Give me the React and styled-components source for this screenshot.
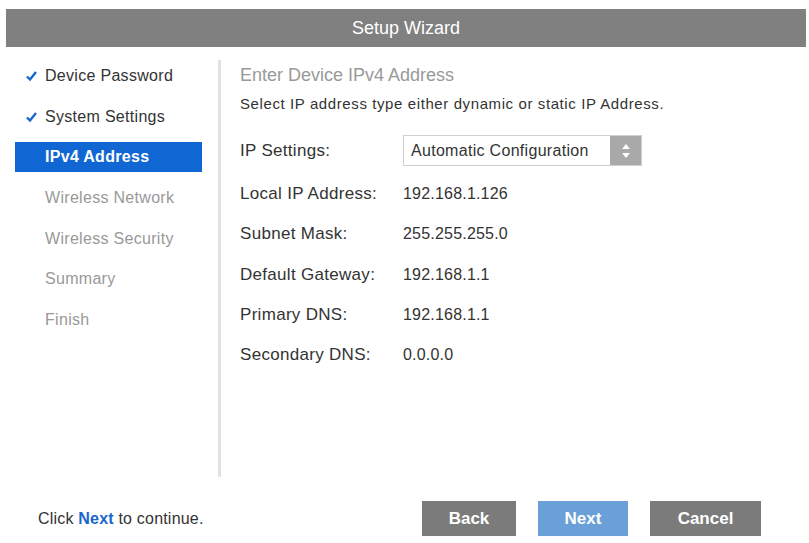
import React from "react";
import styled, { createGlobalStyle } from "styled-components";

const GlobalStyle = createGlobalStyle`
  html, body {
    margin: 0;
    padding: 0;
    background: #fff;
  }
  body {
    font-family: "Liberation Sans", Arial, sans-serif;
    color: #333;
  }
`;

const Page = styled.div`
  width: 809px;
  height: 543px;
  box-sizing: border-box;
  padding: 9px 3px 0 6px;
  display: flex;
  flex-direction: column;
`;

const Header = styled.div`
  height: 38px;
  background-color: #808080;
  color: #fff;
  font-size: 18px;
  display: flex;
  align-items: center;
  justify-content: center;
`;

const Main = styled.div`
  height: 430px;
  display: flex;
`;

const Sidebar = styled.ul`
  width: 212px;
  box-sizing: border-box;
  margin: 0;
  padding: 14px 16px 0 9px;
  list-style: none;
  display: flex;
  flex-direction: column;
  gap: 10.7px;
`;

const Step = styled.li`
  height: 30px;
  display: flex;
  align-items: center;
  padding-left: ${(props) => (props.$done ? "11px" : "30px")};
  font-size: 16px;
  letter-spacing: 0.3px;
  white-space: nowrap;
  color: ${(props) =>
    props.$active ? "#fff" : props.$done ? "#333" : "#999"};
  font-weight: ${(props) => (props.$active ? "bold" : "normal")};
  background-color: ${(props) => (props.$active ? "#1067d3" : "transparent")};

  svg {
    margin-right: 8px;
  }
`;

const Divider = styled.div`
  width: 3px;
  margin-top: 13px;
  background-color: #e2e2e2;
`;

const Content = styled.div`
  flex: 1;
  padding: 18px 0 0 19px;
`;

const Title = styled.div`
  font-size: 18px;
  line-height: 20px;
  color: #999;
`;

const Intro = styled.div`
  margin-top: 10px;
  font-size: 15px;
  letter-spacing: 0.6px;
  line-height: 18px;
  color: #333;
  white-space: nowrap;
`;

const Row = styled.div`
  display: flex;
  align-items: center;
  height: ${(props) => props.$h || "40.3px"};
  margin-top: ${(props) => props.$mt || "0"};
`;

const Label = styled.div`
  width: 163px;
  font-size: 17px;
  letter-spacing: 0.3px;
  color: #333;
  white-space: nowrap;
`;

const Value = styled.div`
  font-size: 16px;
  letter-spacing: 0.2px;
  color: #333;
`;

const Gap = styled.div`
  height: 8px;
`;

const Select = styled.div`
  width: 239px;
  height: 31px;
  box-sizing: border-box;
  border: 1px solid #cfcfcf;
  display: flex;
  align-items: stretch;
`;

const SelectText = styled.div`
  flex: 1;
  display: flex;
  align-items: center;
  padding-left: 7px;
  font-size: 16px;
  letter-spacing: 0.3px;
  color: #333;
  white-space: nowrap;
`;

const SelectArrow = styled.div`
  width: 31px;
  background-color: #a9a9a9;
  display: flex;
  align-items: center;
  justify-content: center;
`;

const Footer = styled.div`
  display: flex;
  align-items: center;
  padding-top: 24px;
`;

const Hint = styled.div`
  padding-left: 32px;
  font-size: 16px;
  letter-spacing: 0.2px;
  color: #333;

  b {
    color: #1a66cc;
  }
`;

const Buttons = styled.div`
  margin-left: auto;
  margin-right: 45px;
  display: flex;
  gap: 22px;
`;

const Button = styled.div`
  height: 35px;
  width: ${(props) => props.$w};
  display: flex;
  align-items: center;
  justify-content: center;
  font-size: 17px;
  font-weight: bold;
  color: #fff;
  background-color: ${(props) => (props.$primary ? "#6b9fd8" : "#7b7b7b")};
`;

const Check = () => (
  <svg width="11" height="10" viewBox="0 0 11 10">
    <path d="M1 5.5 L4 8.5 L10 1" fill="none" stroke="#1a66cc" strokeWidth="2.4" />
  </svg>
);

const steps = [
  { name: "Device Password", done: true },
  { name: "System Settings", done: true },
  { name: "IPv4 Address", active: true },
  { name: "Wireless Network" },
  { name: "Wireless Security" },
  { name: "Summary" },
  { name: "Finish" },
];

const fields = [
  ["Local IP Address:", "192.168.1.126"],
  ["Subnet Mask:", "255.255.255.0"],
  ["Default Gateway:", "192.168.1.1"],
  ["Primary DNS:", "192.168.1.1"],
  ["Secondary DNS:", "0.0.0.0"],
];

export default function App() {
  return (
    <>
      <GlobalStyle />
      <Page>
        <Header>Setup Wizard</Header>
        <Main>
          <Sidebar>
            {steps.map((s) => (
              <Step key={s.name} $done={s.done} $active={s.active}>
                {s.done && <Check />}
                {s.name}
              </Step>
            ))}
          </Sidebar>
          <Divider />
          <Content>
            <Title>Enter Device IPv4 Address</Title>
            <Intro>Select IP address type either dynamic or static IP Address.</Intro>
            <Row $h="31px" $mt="22px">
              <Label>IP Settings:</Label>
              <Select>
                <SelectText>Automatic Configuration</SelectText>
                <SelectArrow>
                  <svg width="8" height="14" viewBox="0 0 8 14">
                    <path d="M4 0 L8 5 L0 5 Z M0 9 L8 9 L4 14 Z" fill="#fff" />
                  </svg>
                </SelectArrow>
              </Select>
            </Row>
            <Gap />
            {fields.map(([label, value]) => (
              <Row key={label}>
                <Label>{label}</Label>
                <Value>{value}</Value>
              </Row>
            ))}
          </Content>
        </Main>
        <Footer>
          <Hint>
            Click <b>Next</b> to continue.
          </Hint>
          <Buttons>
            <Button $w="94px">Back</Button>
            <Button $w="90px" $primary>
              Next
            </Button>
            <Button $w="111px">Cancel</Button>
          </Buttons>
        </Footer>
      </Page>
    </>
  );
}
